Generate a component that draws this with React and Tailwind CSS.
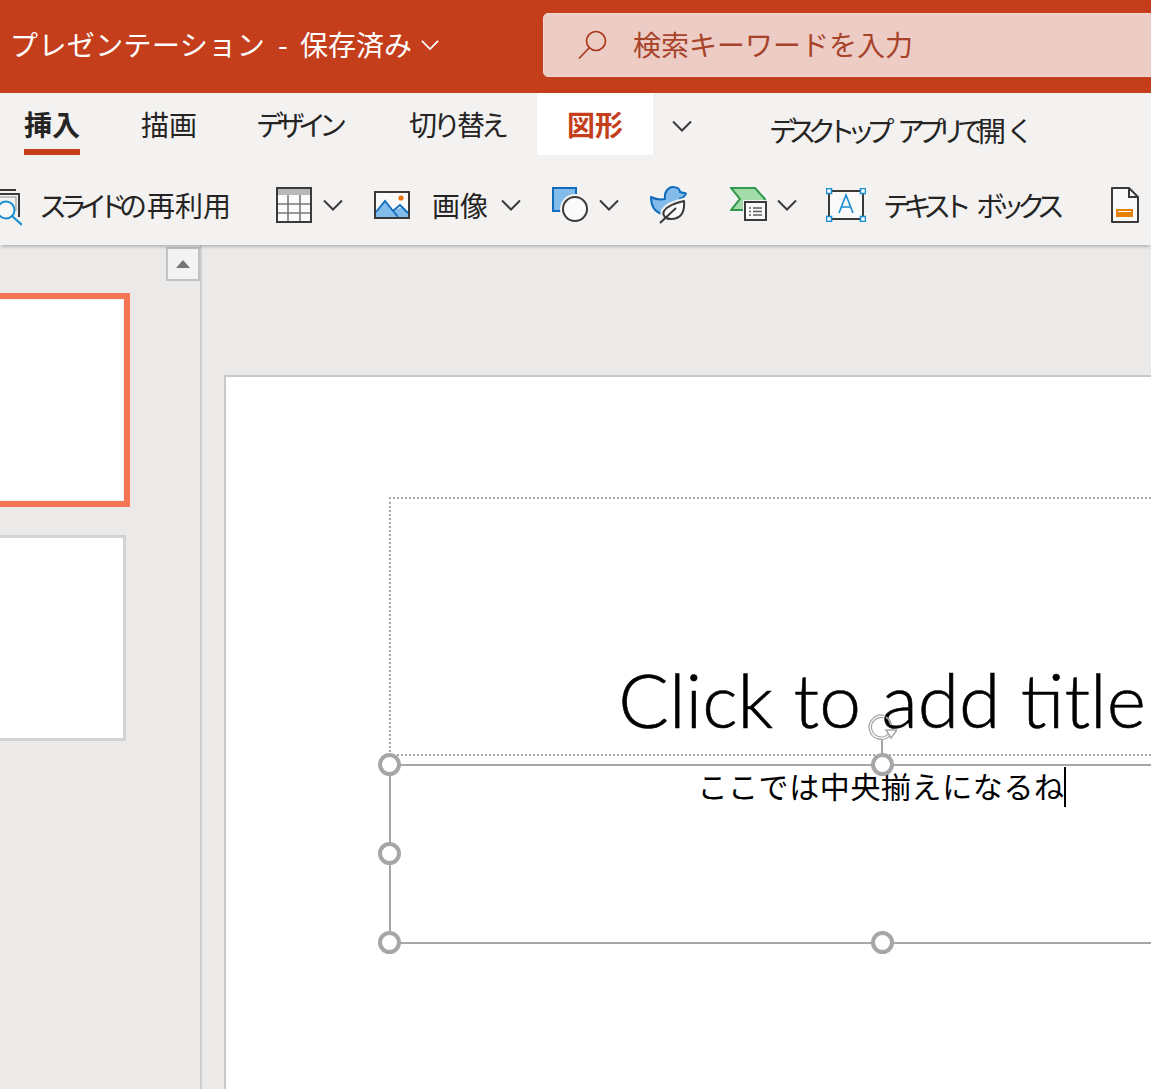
const FONT = '"Noto Sans CJK JP", sans-serif';

function K({ children, t }) {
  return <span className={t || 'tracking-[-6px]'}>{children}</span>;
}

function Chevron({ className, color = '#3b3a39' }) {
  return (
    <svg viewBox="0 0 20 12" className={`w-[20px] h-[12px] shrink-0 ${className || ''}`} fill="none" stroke={color} strokeWidth="2">
      <path d="M1 1.5 L10 10.5 L19 1.5" />
    </svg>
  );
}

function ReuseIcon() {
  return (
    <svg viewBox="0 0 24 40" className="w-[24px] h-[40px] shrink-0">
      <path d="M0 3H18M0 7H21V30" fill="none" stroke="#3b3a39" strokeWidth="2" />
      <path d="M0 10H18V24" fill="none" stroke="#b0b0b0" strokeWidth="1.5" />
      <circle cx="8" cy="23" r="8.5" fill="#f8f8f8" stroke="#1b8ed1" strokeWidth="2" />
      <path d="M14 29 L24 38" stroke="#1b8ed1" strokeWidth="2.2" />
    </svg>
  );
}

function TableIcon() {
  return (
    <svg viewBox="0 0 36 36" className="w-[36px] h-[36px] shrink-0">
      <rect x="1" y="1" width="34" height="34" fill="#fafafa" stroke="#3b3a39" strokeWidth="2" />
      <rect x="2" y="2" width="32" height="6" fill="#b8b8b8" />
      <path d="M12 8V34M24 8V34M2 17H34M2 26H34" stroke="#7a7a7a" strokeWidth="1.6" />
    </svg>
  );
}

function ImageIcon() {
  return (
    <svg viewBox="0 0 36 28" className="w-[36px] h-[28px] shrink-0">
      <rect x="1" y="1" width="34" height="26" fill="#fafafa" stroke="#3b3a39" strokeWidth="2" />
      <path d="M2 21 L11 10 L23 26 H2Z" fill="#83bbeb" />
      <path d="M19 20 L28 16 L34 22 V26 H24Z" fill="#83bbeb" />
      <path d="M2 21 L11 10 L24 26M19 20 L26 14 L34 22" fill="none" stroke="#0f6cbd" strokeWidth="1.8" />
      <circle cx="27" cy="7" r="2.6" fill="#e8710a" />
    </svg>
  );
}

function ShapesIcon() {
  return (
    <svg viewBox="0 0 38 36" className="w-[38px] h-[36px] shrink-0">
      <rect x="1" y="1" width="23" height="23" fill="#83bbeb" stroke="#0f6cbd" strokeWidth="2" />
      <circle cx="23" cy="22" r="15" fill="#f3f2f1" />
      <circle cx="23" cy="22" r="12" fill="#fafafa" stroke="#3b3a39" strokeWidth="2" />
    </svg>
  );
}

function DuckIcon() {
  return (
    <svg viewBox="0 0 38 40" className="w-[38px] h-[40px] shrink-0">
      <path d="M1 11 C5 13 10 14 15 13 C14 6 18 1 23 1 C27 1 30 3 30 6 L36 7.5 C35 10 33 12 30 12.5 L30 20 L12 28 C5 26 1 20 1 11Z" fill="#83bbeb" stroke="#0f6cbd" strokeWidth="2" strokeLinejoin="round" />
      <path d="M34 15 C35 26 31 33 21 33 C15 33 12 29 14 25 C17 20 25 17 34 15Z" fill="#f3f2f1" stroke="#f3f2f1" strokeWidth="6" />
      <path d="M34 15 C35 26 31 33 21 33 C15 33 12 29 14 25 C17 20 25 17 34 15Z" fill="#fafafa" stroke="#3b3a39" strokeWidth="2" strokeLinejoin="round" />
      <path d="M10 37 L26 22" stroke="#3b3a39" strokeWidth="2" />
    </svg>
  );
}

function SmartArtIcon() {
  return (
    <svg viewBox="0 0 38 34" className="w-[38px] h-[34px] shrink-0">
      <path d="M1 1 H25 L35 12 L27 23 H1 L10 12Z" fill="#a3dcaa" stroke="#339a4d" strokeWidth="2" strokeLinejoin="miter" />
      <rect x="13" y="13" width="25" height="21" fill="#f3f2f1" />
      <rect x="15" y="15" width="21" height="18" fill="#fafafa" stroke="#3b3a39" strokeWidth="2" />
      <path d="M19 21H21M19 24.5H21M19 28H21M23 21H32M23 24.5H32M23 28H32" stroke="#5f5f5f" strokeWidth="1.6" />
    </svg>
  );
}

function TextBoxIcon() {
  return (
    <svg viewBox="0 0 40 34" className="w-[40px] h-[34px] shrink-0">
      <rect x="3" y="3" width="34" height="28" fill="#fafafa" stroke="#3b3a39" strokeWidth="2" />
      <path d="M13 25 L20 7 L27 25M15.5 19H24.5" fill="none" stroke="#1b8ed1" strokeWidth="1.7" />
      {[[3, 3], [37, 3], [3, 31], [37, 31]].map(([x, y]) => (
        <rect key={`${x}-${y}`} x={x - 2.5} y={y - 2.5} width="5" height="5" fill="#fff" stroke="#1b8ed1" strokeWidth="1.6" />
      ))}
    </svg>
  );
}

function HeaderIcon() {
  return (
    <svg viewBox="0 0 30 36" className="w-[30px] h-[36px] shrink-0">
      <path d="M2 1 H19 L28 10 V35 H2Z" fill="#fafafa" stroke="#3b3a39" strokeWidth="2" strokeLinejoin="round" />
      <path d="M19 1 V10 H28" fill="none" stroke="#3b3a39" strokeWidth="2" />
      <rect x="7" y="23" width="15" height="6" fill="#fff" stroke="#e8810a" strokeWidth="2" />
      <rect x="7" y="25" width="15" height="4" fill="#e8810a" />
    </svg>
  );
}

function Handle({ className }) {
  return <div className={`absolute w-[23px] h-[23px] rounded-full bg-white border-[4px] border-[#a6a6a6] ${className}`} />;
}

export default function App() {
  return (
    <div className="w-[1151px] h-[1089px] overflow-hidden flex flex-col bg-[#ebeae9] text-[#252423]" style={{ fontFamily: FONT }}>
      {/* Title bar */}
      <div className="h-[93px] shrink-0 bg-[#c43e1c] flex items-center text-white">
        <div className="ml-[10px] w-[512px] -mt-[5px] flex items-center text-[28px] leading-[40px] whitespace-nowrap">
          <span className="w-[268px] tracking-[0.4px]">プレゼンテーション</span>
          <span className="w-[22px]">-</span>
          <span>保存済み</span>
          <Chevron className="ml-[8px] mt-[2px] scale-90" color="#ffffff" />
        </div>
        <div className="ml-[21px] flex-1 h-[64px] -mr-[20px] -mt-[3px] rounded-[5px] bg-[#ecccc4] border border-[#f1d9d2] flex items-center">
          <svg viewBox="0 0 32 32" className="w-[32px] h-[32px] ml-[33px] shrink-0" fill="none" stroke="#a8371a" strokeWidth="1.7">
            <circle cx="19" cy="12" r="9.5" />
            <path d="M12 19 L2 29.5" />
          </svg>
          <span className="ml-[24px] -mt-[2px] text-[28px] text-[#a8432a] whitespace-nowrap">検索キーワードを入力</span>
        </div>
      </div>

      {/* Tabs */}
      <div className="h-[62px] shrink-0 bg-[#f3f2f1] flex text-[28px] leading-[40px] whitespace-nowrap relative z-20">
        <div className="ml-[24px] w-[56px] h-full border-b-[6px] border-[#c43e1c] font-bold pt-[11px]">挿入</div>
        <div className="ml-[61px] w-[56px] pt-[11px]">描画</div>
        <div className="ml-[59px] w-[92px] pt-[11px]"><K t="tracking-[-7px]">デザイン</K></div>
        <div className="ml-[61px] w-[101px] pt-[11px]"><K t="tracking-[-4px]">切り替</K>え</div>
        <div className="ml-[27px] w-[116px] h-full bg-white text-[#c43e1c] font-bold text-center pt-[11px]">図形</div>
        <Chevron className="ml-[19px] mt-[27px]" />
        <div className="ml-[77px] pt-[17px]"><K t="tracking-[-8.5px]">デスクトップ</K><span className="inline-block w-[11px]" /><K t="tracking-[-8px]">アプリで</K><span className="ml-[1px]">開</span><K t="tracking-[-8px]">く</K></div>
      </div>

      {/* Toolbar */}
      <div className="h-[90px] shrink-0 bg-[#f3f2f1] flex items-center pt-[10px] text-[28px] whitespace-nowrap shadow-[0_3px_3px_-1px_rgba(0,0,0,0.22)] relative z-10">
        <div className="-ml-[2px] mt-[4px]"><ReuseIcon /></div>
        <span className="ml-[17px] w-[190px]"><K t="tracking-[-8px]">スライドの</K><span className="ml-[8px]">再利用</span></span>
        <div className="ml-[47px]"><TableIcon /></div>
        <Chevron className="ml-[11px]" />
        <div className="ml-[31px]"><ImageIcon /></div>
        <span className="ml-[22px] w-[57px]">画像</span>
        <Chevron className="ml-[12px]" />
        <div className="ml-[31px]"><ShapesIcon /></div>
        <Chevron className="ml-[9px]" />
        <div className="ml-[31px] mt-[2px]"><DuckIcon /></div>
        <div className="ml-[42px] -mt-[2px]"><SmartArtIcon /></div>
        <Chevron className="ml-[9px]" />
        <div className="ml-[29px]"><TextBoxIcon /></div>
        <span className="ml-[17px] w-[177px]"><K t="tracking-[-7.5px]">テキスト</K><span className="inline-block w-[12px]" /><K t="tracking-[-7.5px]">ボックス</K></span>
        <div className="ml-[50px]"><HeaderIcon /></div>
      </div>

      {/* Body */}
      <div className="flex-1 flex min-h-0">
        {/* Thumbnail rail */}
        <div className="w-[202px] shrink-0 border-r-2 border-[#cdced1] relative">
          <div className="absolute right-0 top-[2px] w-[34px] h-[34px] border-2 border-[#c0c2c6] bg-[#f3f3f3] flex items-center justify-center">
            <div className="w-0 h-0 border-l-[7px] border-r-[7px] border-b-[8px] border-l-transparent border-r-transparent border-b-[#767676]" />
          </div>
          <div className="mt-[48px] w-[130px] h-[214px] border-[6px] border-l-0 border-[#f47553] bg-[#f3f2f1] pr-[1px] py-[1px]">
            <div className="w-full h-full bg-white" />
          </div>
          <div className="mt-[28px] w-[126px] h-[206px] border-[3px] border-l-0 border-[#d3d3d6] bg-white" />
        </div>

        {/* Canvas */}
        <div className="flex-1 min-w-0 relative overflow-hidden">
          <div className="absolute left-[22px] top-[130px] w-[1400px] h-[900px] bg-white border-2 border-[#c8c8c8]">
            {/* Title placeholder */}
            <div className="absolute left-[163px] top-[120px] w-[986px] h-[259px] border-2 border-dotted border-[#a6a6a6] flex items-end justify-center">
              <span className="text-[75px] leading-[1] pb-[17px] text-black font-light whitespace-nowrap" style={{ fontFamily: 'Lato, sans-serif', WebkitTextStroke: '0.6px #000' }}>Click to add title</span>
            </div>
            {/* Rotation handle */}
            <div className="absolute left-[655px] top-[363px] w-[2px] h-[24px] bg-[#a6a6a6]" />
            <svg viewBox="0 0 30 30" className="absolute left-[641px] top-[337px] w-[30px] h-[30px]" fill="none">
              <path d="M17 2.5 A11 11 0 1 0 22 21" stroke="#a6a6a6" strokeWidth="3.6" />
              <path d="M17 2.5 A11 11 0 1 0 22 21" stroke="#ffffff" strokeWidth="1.2" />
              <path d="M19 3 A11 11 0 0 1 24 11" stroke="#a6a6a6" strokeWidth="2" />
              <path d="M19 16 L30 16 L24 24Z" fill="#ffffff" stroke="#a6a6a6" strokeWidth="1.5" />
            </svg>
            {/* Subtitle box */}
            <div className="absolute left-[163px] top-[387px] w-[984px] h-[180px] border-2 border-[#a6a6a6] flex justify-center">
              <div className="relative text-[30px] leading-[40px] tracking-[0.6px] text-black whitespace-nowrap -mt-[1px]">
                ここでは中央揃えになるね
                <span className="absolute -right-[1px] top-[2px] w-[2px] h-[40px] bg-black" />
              </div>
            </div>
            <Handle className="left-[152px] top-[376px]" />
            <Handle className="left-[645px] top-[376px]" />
            <Handle className="left-[152px] top-[465px]" />
            <Handle className="left-[152px] top-[554px]" />
            <Handle className="left-[645px] top-[554px]" />
          </div>
        </div>
      </div>
    </div>
  );
}
